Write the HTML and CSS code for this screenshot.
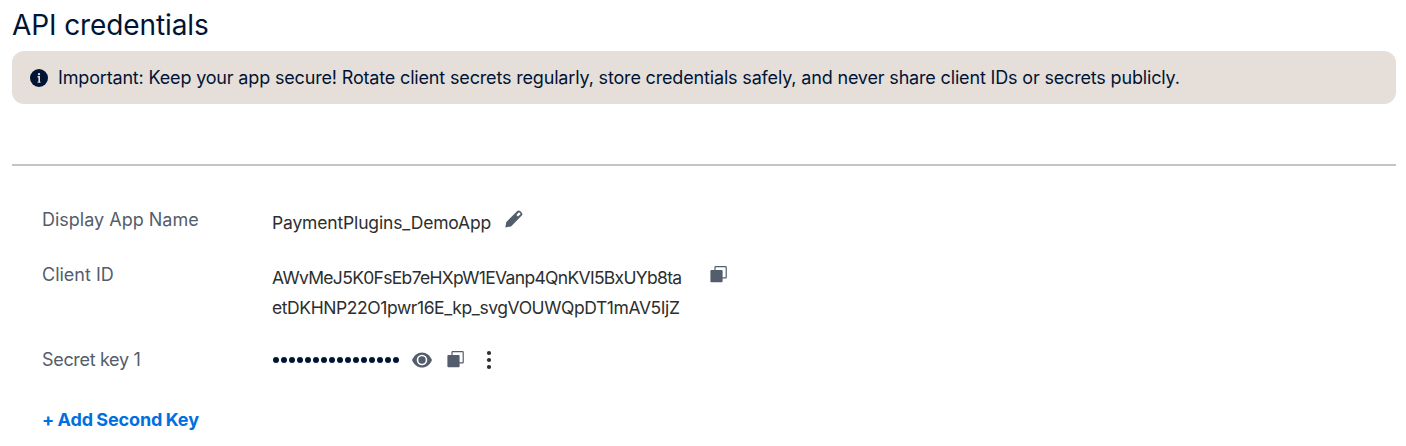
FILE: index.html
```html
<!DOCTYPE html>
<html lang="en">
<head>
  <meta charset="UTF-8">
  <meta name="viewport" content="width=device-width, initial-scale=1.0">
  <title>API credentials</title>
  <link rel="stylesheet" href="styles.css">
</head>
<body>
<main class="page">
  <h1>API credentials</h1>

  <div class="alert">
    <svg class="alert-icon" viewBox="0 0 18 18">
      <circle cx="9" cy="9" r="9" fill="#001435"/>
      <circle cx="9" cy="5.2" r="1.15" fill="#e6dfd9"/>
      <path d="M7.5 7.8h1.7v5.6" fill="none" stroke="#e6dfd9" stroke-width="1.6"/>
      <path d="M7.3 13.2h3.4" stroke="#e6dfd9" stroke-width=".7"/>
    </svg>
    <span class="alert-text">Important: Keep your app secure! Rotate client secrets regularly, store credentials safely, and never share client IDs or secrets publicly.</span>
  </div>

  <section class="credentials">
    <div class="row row-name">
      <div class="label">Display App Name</div>
      <div class="value value-name">PaymentPlugins_DemoApp</div>
      <button class="icon-btn edit-btn" aria-label="Edit">
        <svg width="18" height="18" viewBox="0 0 18 18" fill="#545d6b">
          <path fill-rule="evenodd" d="M.3 17.6 1.3 12 12.3 1.1Q13.8-.1 15.2 1.1L16.8 2.7Q18 4 16.8 5.5L6 16.4ZM11.4 4.9 13 6.5 15.4 4.2Q15.7 3.9 15.4 3.6L14.3 2.5Q14 2.2 13.7 2.5Z"/>
        </svg>
      </button>
    </div>

    <div class="row row-client">
      <div class="label">Client ID</div>
      <div class="value"><span class="id-top">AWvMeJ5K0FsEb7eHXpW1EVanp4QnKVI5BxUYb8ta</span><br><span class="id-bottom">etDKHNP22O1pwr16E_kp_svgVOUWQpDT1mAV5IjZ</span></div>
      <button class="icon-btn copy-btn" aria-label="Copy">
        <svg width="17" height="17" viewBox="0 0 17 17">
          <rect x="5" y=".7" width="11.2" height="11.2" rx=".6" fill="#fff" stroke="#545d6b" stroke-width="1.2"/>
          <rect x=".4" y="4" width="12.2" height="12.2" rx="1" fill="#545d6b"/>
        </svg>
      </button>
    </div>

    <div class="row row-secret">
      <div class="label label-secret">Secret key 1</div>
      <div class="secret">
        <div class="dots">
          <i></i><i></i><i></i><i></i><i></i><i></i><i></i><i></i>
          <i></i><i></i><i></i><i></i><i></i><i></i><i></i><i></i>
        </div>
        <button class="icon-btn eye-btn" aria-label="Show">
          <svg width="20" height="16" viewBox="0 0 20 16">
            <path d="M0 8C2 3.2 5.7.4 10 .4S18 3.2 20 8C18 12.8 14.3 15.6 10 15.6S2 12.8 0 8Z" fill="#545d6b"/>
            <circle cx="10" cy="8" r="4.5" fill="#545d6b" stroke="#fff" stroke-width="1.6"/>
          </svg>
        </button>
        <button class="icon-btn" aria-label="Copy">
          <svg width="17" height="17" viewBox="0 0 17 17">
            <rect x="5" y=".7" width="11.2" height="11.2" rx=".6" fill="#fff" stroke="#545d6b" stroke-width="1.2"/>
            <rect x=".4" y="4" width="12.2" height="12.2" rx="1" fill="#545d6b"/>
          </svg>
        </button>
        <button class="icon-btn menu-btn" aria-label="More">
          <svg width="6" height="20" viewBox="0 0 6 20" fill="#2c2e2f">
            <circle cx="3" cy="3" r="2.1"/>
            <circle cx="3" cy="10" r="2.1"/>
            <circle cx="3" cy="17" r="2.1"/>
          </svg>
        </button>
      </div>
    </div>

    <a class="add-key" href="#">+ Add Second Key</a>
  </section>
</main>
</body>
</html>
```
FILE: styles.css
```css
* { margin: 0; padding: 0; box-sizing: border-box; }
body {
  background: #fff;
  color: #001435;
  font-family: Inter, "Liberation Sans", sans-serif;
  font-size: 18px;
  overflow: hidden;
}
.page {
  padding: 9px 10px 0 12px;
}
h1 {
  height: 42px;
  font-size: 28px;
  font-weight: 400;
  line-height: 33px;
  letter-spacing: -0.1px;
  white-space: nowrap;
}

/* Alert */
.alert {
  display: flex;
  align-items: center;
  gap: 10px;
  height: 53px;
  padding: 0 18px;
  background: #e6dfd9;
  border-radius: 12px;
  letter-spacing: -0.165px;
  white-space: nowrap;
}
.alert-icon {
  width: 18px;
  height: 18px;
  flex: none;
}

/* Credentials */
.credentials {
  margin-top: 60px;
  padding: 39px 30px 0;
  border-top: 2px solid #c4c4c4;
}
.row {
  display: flex;
  align-items: flex-start;
  line-height: 30px;
  white-space: nowrap;
}
.label {
  width: 230px;
  flex: none;
  color: #545d6b;
}
.label-secret { letter-spacing: -0.33px; }
.value {
  color: #2c2e2f;
  font-size: 17.5px;
  padding-top: 3px;
}
.value-name { letter-spacing: -0.16px; }
.id-top { letter-spacing: -0.68px; }
.id-bottom { letter-spacing: -0.42px; }
.row-name { height: 55px; }
.row-client { height: 85px; }
.row-client .value { width: 438px; }
.row-secret { height: 60px; }
.icon-btn {
  display: flex;
  border: none;
  background: none;
}
.edit-btn { margin: 5px 0 0 14px; }
.copy-btn { margin-top: 6px; }
.secret {
  display: flex;
  align-items: center;
  height: 29px;
}
.dots {
  display: flex;
  gap: 2px;
  margin: 0 13px 0 1px;
}
.dots i {
  width: 6px;
  height: 6px;
  border-radius: 50%;
  background: #001435;
}
.eye-btn { margin-right: 15px; }
.menu-btn { margin-left: 22px; }
.add-key {
  color: #0070e0;
  font-weight: 700;
  line-height: 30px;
  letter-spacing: -0.1px;
  word-spacing: -0.8px;
  text-decoration: none;
}
```
